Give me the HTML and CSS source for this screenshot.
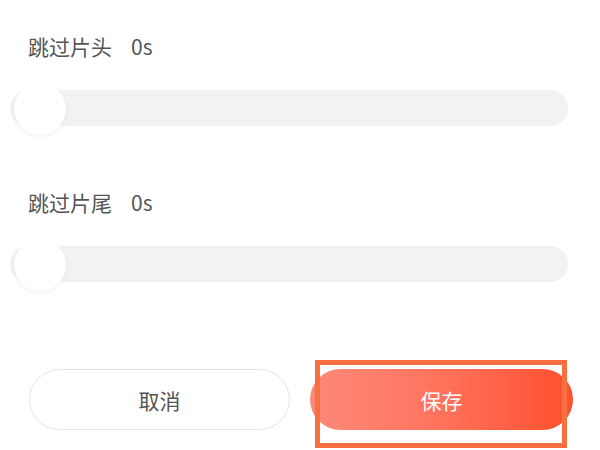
FILE: index.html
```html
<!DOCTYPE html>
<html lang="zh">
<head>
<meta charset="utf-8">
<link rel="stylesheet" href="styles.css">
</head>
<body>
<div class="page">
  <div class="label label-first"><span>跳过片头</span><span class="val">0s</span></div>
  <div class="track"><div class="thumb"></div></div>
  <div class="label label-second"><span>跳过片尾</span><span class="val">0s</span></div>
  <div class="track"><div class="thumb"></div></div>
  <div class="buttons">
    <div class="btn cancel">取消</div>
    <div class="btn save">保存</div>
  </div>
  <div class="highlight"></div>
</div>
</body>
</html>
```
FILE: styles.css
```css
html, body {
  margin: 0;
  padding: 0;
  background: #ffffff;
}
.page {
  position: relative;
  width: 600px;
  height: 450px;
  overflow: hidden;
  font-family: "Noto Sans CJK SC", "Noto Sans", sans-serif;
  color: #555555;
}
.label {
  display: flex;
  gap: 19px;
  font-size: 21px;
  line-height: 28px;
  margin-left: 28px;
}
.label-first { padding-top: 32px; }
.label-second { margin-top: 62px; }
.track {
  position: relative;
  margin: 30px 0 0 10px;
  width: 558px;
  height: 36px;
  border-radius: 18px;
  background: #f2f2f2;
}
.thumb {
  position: absolute;
  left: 4px;
  top: -7px;
  width: 52px;
  height: 52px;
  border-radius: 50%;
  background: #ffffff;
  box-shadow: 0 2px 5px rgba(0, 0, 0, 0.06);
}
.buttons {
  display: flex;
  gap: 20px;
  margin: 87px 0 0 29px;
}
.btn {
  height: 61px;
  border-radius: 31px;
  display: flex;
  align-items: center;
  justify-content: center;
  font-size: 21px;
  box-sizing: border-box;
}
.cancel {
  width: 261px;
  border: 1.5px solid #e4e4e4;
  color: #555555;
}
.save {
  width: 263px;
  background: linear-gradient(90deg, #fc8a79 0%, #ff7560 45%, #ff4f2f 100%);
  color: #ffffff;
}
.highlight {
  position: absolute;
  left: 315px;
  top: 360px;
  width: 252px;
  height: 88px;
  box-sizing: border-box;
  border: 5px solid #f7703f;
}
```
